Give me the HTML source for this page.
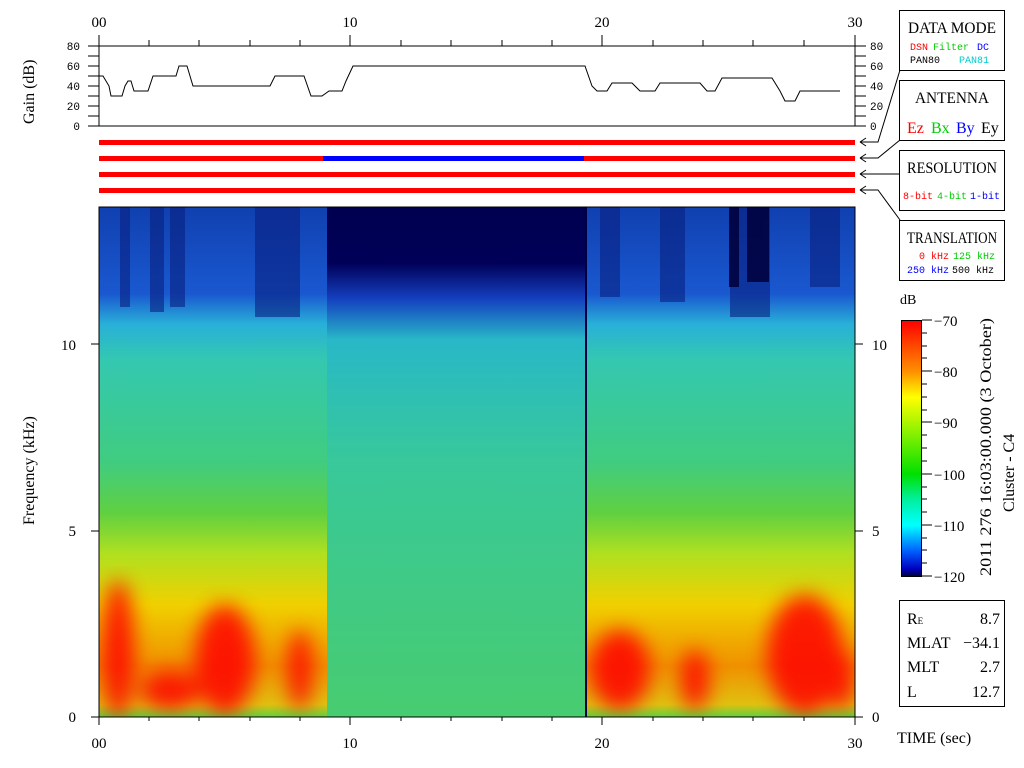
<!DOCTYPE html>
<html><head><style>
html,body{margin:0;padding:0;background:#fff;width:1024px;height:768px;overflow:hidden}
svg text{font-family:"Liberation Mono",monospace}
.s{font-family:"Liberation Serif",serif}
</style></head><body>
<svg width="1024" height="768" xmlns="http://www.w3.org/2000/svg">
<defs>
<linearGradient id="g1" x1="0" y1="0" x2="0" y2="1">
<stop offset="0" stop-color="#1040b0"/><stop offset="0.17" stop-color="#1a58d0"/>
<stop offset="0.23" stop-color="#28b0d8"/><stop offset="0.3" stop-color="#34c8b0"/>
<stop offset="0.5" stop-color="#40cc80"/><stop offset="0.6" stop-color="#60d040"/>
<stop offset="0.68" stop-color="#b0e020"/><stop offset="0.78" stop-color="#f0d000"/>
<stop offset="0.9" stop-color="#f09000"/><stop offset="0.975" stop-color="#e0c010"/><stop offset="1" stop-color="#60d040"/>
</linearGradient>
<linearGradient id="g2" x1="0" y1="0" x2="0" y2="1">
<stop offset="0" stop-color="#000050"/><stop offset="0.11" stop-color="#000058"/>
<stop offset="0.18" stop-color="#1440c0"/><stop offset="0.26" stop-color="#28b8c8"/>
<stop offset="0.5" stop-color="#38c89a"/><stop offset="1" stop-color="#48cc70"/>
</linearGradient>
<linearGradient id="cb" x1="0" y1="0" x2="0" y2="1">
<stop offset="0" stop-color="#ff0000"/><stop offset="0.2" stop-color="#ff9000"/>
<stop offset="0.3" stop-color="#ffff00"/><stop offset="0.6" stop-color="#00e000"/>
<stop offset="0.7" stop-color="#00f0a0"/><stop offset="0.8" stop-color="#00ffff"/>
<stop offset="0.9" stop-color="#0060ff"/><stop offset="0.97" stop-color="#0000c0"/><stop offset="1" stop-color="#000040"/>
</linearGradient>
<filter id="bl"><feGaussianBlur stdDeviation="10"/></filter>
<clipPath id="cp"><rect x="99" y="207" width="756" height="510"/></clipPath>
</defs>

<g font-size="15" class="s" text-anchor="middle">
<text x="99" y="27" class="s">00</text><text x="350" y="27" class="s">10</text>
<text x="602" y="27" class="s">20</text><text x="855" y="27" class="s">30</text>
</g>
<g stroke="#000" stroke-width="1" fill="none">
<line x1="99" y1="35" x2="99" y2="126"/><line x1="855" y1="35" x2="855" y2="126"/>
<line x1="88" y1="46" x2="866" y2="46"/><line x1="88" y1="126" x2="866" y2="126"/>
<path d="M149 40v6M199 40v6M250 40v6M300 40v6M350 35v11M401 40v6M451 40v6M502 40v6M552 40v6M602 35v11M653 40v6M703 40v6M753 40v6M804 40v6"/>
<path d="M88 56h11M88 66h11M88 76h11M88 86h11M88 96h11M88 106h11M88 116h11M855 56h11M855 66h11M855 76h11M855 86h11M855 96h11M855 106h11M855 116h11"/>
<polyline points="99,76 103,76 106,81 109,86 111,96 122,96 125,86 128,81 131,81 134,91 148,91 153,76 176,76 179,66 187,66 193,86 270,86 275,76 304,76 311,96 322,96 329,91 342,91 346,81 353,66 585,66 592,86 597,91 607,91 612,83 632,83 640,91 655,91 660,83 700,83 707,91 715,91 722,78 772,78 780,91 785,101 795,101 800,91 840,91"/>
</g>
<g font-size="11" text-anchor="end">
<text x="80" y="50">80</text><text x="80" y="70">60</text><text x="80" y="90">40</text><text x="80" y="110">20</text><text x="80" y="130">0</text>
</g>
<g font-size="11">
<text x="870" y="50">80</text><text x="870" y="70">60</text><text x="870" y="90">40</text><text x="870" y="110">20</text><text x="870" y="130">0</text>
</g>
<text class="s" font-size="16" transform="translate(34,124) rotate(-90)">Gain (dB)</text>

<rect x="99" y="140" width="756" height="5" fill="#f00"/>
<rect x="99" y="156" width="756" height="5" fill="#f00"/>
<rect x="323" y="156" width="261" height="5" fill="#00f"/>
<rect x="99" y="172" width="756" height="5" fill="#f00"/>
<rect x="99" y="188" width="756" height="5" fill="#f00"/>
<g stroke="#000" fill="none">
<path d="M860 142l6 -4M860 142l6 4M860 142h18l22 -72"/>
<path d="M860 158l6 -4M860 158l6 4M860 158h18l22 -18"/>
<path d="M860 174l6 -4M860 174l6 4M860 174h40"/>
<path d="M860 190l6 -4M860 190l6 4M860 190h18l22 30"/>
</g>

<g clip-path="url(#cp)">
<rect x="99" y="207" width="756" height="510" fill="url(#g1)"/>
<g fill="#082080" opacity="0.6">
<rect x="120" y="207" width="10" height="100"/><rect x="150" y="207" width="14" height="105"/>
<rect x="170" y="207" width="15" height="100"/><rect x="255" y="207" width="45" height="110"/>
<rect x="600" y="207" width="20" height="90"/><rect x="660" y="207" width="25" height="95"/>
<rect x="730" y="207" width="40" height="110"/><rect x="810" y="207" width="30" height="80"/>
</g>
<g fill="#00003c" opacity="0.85"><rect x="729" y="207" width="10" height="80"/><rect x="747" y="207" width="22" height="75"/></g>
<g fill="#f00" filter="url(#bl)" opacity="0.85">
<ellipse cx="118" cy="650" rx="16" ry="70"/><ellipse cx="225" cy="660" rx="30" ry="55"/>
<ellipse cx="300" cy="670" rx="12" ry="40"/><ellipse cx="620" cy="670" rx="30" ry="40"/>
<ellipse cx="695" cy="680" rx="14" ry="30"/><ellipse cx="805" cy="655" rx="38" ry="60"/>
<ellipse cx="842" cy="680" rx="12" ry="30"/><ellipse cx="170" cy="690" rx="30" ry="20"/>
</g>
<rect x="327" y="207" width="258" height="510" fill="url(#g2)"/>
<line x1="586" y1="207" x2="586" y2="717" stroke="#000040" stroke-width="2"/>
</g>
<rect x="99" y="207" width="756" height="510" fill="none" stroke="#000"/>
<g stroke="#000">
<path d="M99 717v8M350 717v8M602 717v8M855 717v8M149 717v4M199 717v4M250 717v4M300 717v4M401 717v4M451 717v4M502 717v4M552 717v4M653 717v4M703 717v4M753 717v4M804 717v4"/>
<path d="M91 717h8M91 531h8M91 344h8M855 717h8M855 531h8M855 344h8"/>
</g>
<g class="s" font-size="15" text-anchor="middle">
<text x="99" y="748" class="s">00</text><text x="350" y="748" class="s">10</text>
<text x="602" y="748" class="s">20</text><text x="855" y="748" class="s">30</text>
</g>
<g class="s" font-size="15" text-anchor="end">
<text x="76" y="722" class="s">0</text><text x="76" y="536" class="s">5</text><text x="76" y="350" class="s">10</text>
</g>
<g class="s" font-size="15">
<text x="872" y="722" class="s">0</text><text x="872" y="536" class="s">5</text><text x="872" y="350" class="s">10</text>
</g>
<text class="s" font-size="16" transform="translate(34,525) rotate(-90)">Frequency (kHz)</text>
<text class="s" x="897" y="743" font-size="16">TIME (sec)</text>

<g fill="none" stroke="#000"><rect x="899.5" y="10.5" width="105" height="60"/><rect x="899.5" y="80.5" width="105" height="60"/>
<rect x="899.5" y="150.5" width="105" height="60"/><rect x="899.5" y="220.5" width="105" height="60"/>
<rect x="899.5" y="600.5" width="105" height="106"/></g>
<g class="s" font-size="16" text-anchor="middle">
<text x="952" y="33" class="s" textLength="88" lengthAdjust="spacingAndGlyphs">DATA MODE</text>
<text x="952" y="103" class="s" textLength="74" lengthAdjust="spacingAndGlyphs">ANTENNA</text>
<text x="952" y="173" class="s" textLength="90" lengthAdjust="spacingAndGlyphs">RESOLUTION</text>
<text x="952" y="243" class="s" textLength="90" lengthAdjust="spacingAndGlyphs">TRANSLATION</text>
</g>
<g font-size="10">
<text x="910" y="50" fill="#f00">DSN</text><text x="933" y="50" fill="#0c0">Filter</text><text x="977" y="50" fill="#00f">DC</text>
<text x="910" y="63" fill="#000">PAN80</text><text x="959" y="63" fill="#0cc">PAN81</text>
<text x="903" y="199" fill="#f00">8-bit</text><text x="937" y="199" fill="#0c0">4-bit</text><text x="970" y="199" fill="#00f">1-bit</text>
<text x="919" y="259" fill="#f00">0 kHz</text><text x="953" y="259" fill="#0c0">125 kHz</text>
<text x="907" y="273" fill="#00f">250 kHz</text><text x="952" y="273" fill="#000">500 kHz</text>
</g>
<g class="s" font-size="16">
<text x="907" y="133" fill="#f00" class="s">Ez</text><text x="931" y="133" fill="#0c0" class="s">Bx</text>
<text x="956" y="133" fill="#00f" class="s">By</text><text x="981" y="133" fill="#000" class="s">Ey</text>
</g>
<text class="s" x="900" y="304" font-size="14">dB</text>
<rect x="901.5" y="320.5" width="20" height="256" fill="url(#cb)" stroke="#000"/>
<g stroke="#000"><path d="M922 320h10M922 371h10M922 422h10M922 474h10M922 525h10M922 576h10M922 333h5M922 346h5M922 358h5M922 384h5M922 397h5M922 410h5M922 435h5M922 448h5M922 461h5M922 487h5M922 499h5M922 512h5M922 538h5M922 550h5M922 563h5"/></g>
<g class="s" font-size="15">
<text x="934" y="326" class="s">−70</text><text x="934" y="377" class="s">−80</text><text x="934" y="428" class="s">−90</text>
<text x="934" y="480" class="s">−100</text><text x="934" y="531" class="s">−110</text><text x="934" y="582" class="s">−120</text>
</g>
<text class="s" font-size="16" transform="translate(991,576) rotate(-90)" textLength="258" lengthAdjust="spacingAndGlyphs">2011 276 16:03:00.000 (3 October)</text>
<text class="s" font-size="16" transform="translate(1014,512) rotate(-90)">Cluster - C4</text>
<g class="s" font-size="16">
<text x="907" y="624" class="s">R<tspan font-size="9">E</tspan></text><text x="907" y="648" class="s">MLAT</text>
<text x="907" y="672" class="s">MLT</text><text x="907" y="697" class="s">L</text>
</g>
<g class="s" font-size="16" text-anchor="end">
<text x="1000" y="624" class="s">8.7</text><text x="1000" y="648" class="s">−34.1</text>
<text x="1000" y="672" class="s">2.7</text><text x="1000" y="697" class="s">12.7</text>
</g>
</svg>
</body></html>
